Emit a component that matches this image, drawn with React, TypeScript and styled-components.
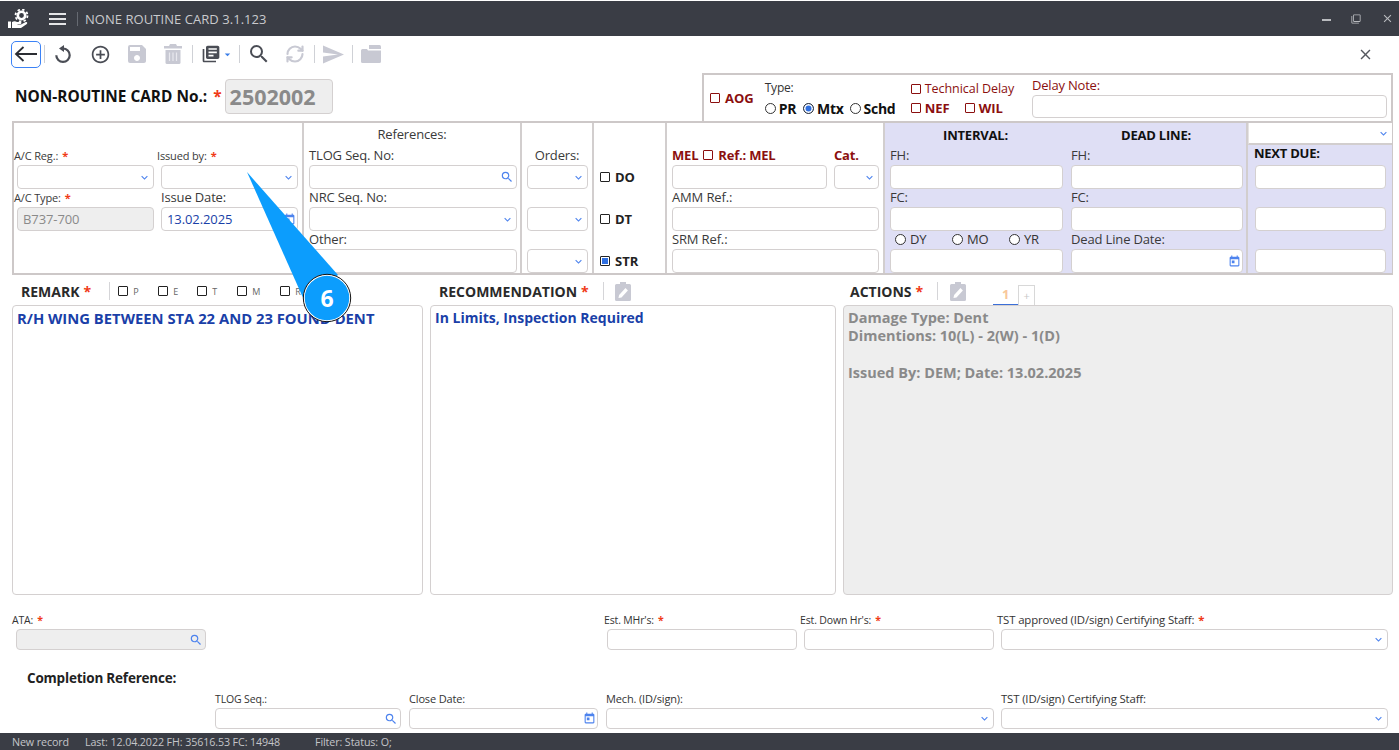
import React from "react";
import styled, { createGlobalStyle } from "styled-components";
import { RefreshCw } from "lucide-react";
import {
  MdSave,
  MdLibraryBooks,
  MdSearch,
  MdSend,
  MdToday,
  MdExpandMore,
  MdClose,
  MdFilterNone,
  MdArrowDropDown,
  MdAddCircleOutline,
} from "react-icons/md";

const FONT = `"Open Sans", "Noto Sans", "Liberation Sans", sans-serif`;

const Global = createGlobalStyle`
  html, body { margin: 0; padding: 0; background: #fff; overflow: hidden; }
  body { font-family: ${FONT}; color: #333; }
  * { box-sizing: border-box; }
`;

const Page = styled.div`
  position: relative;
  width: 1399px;
  height: 750px;
  display: flex;
  flex-direction: column;
  overflow: hidden;
  background: #fff;
`;

const TitleBar = styled.header`
  margin-top: 1px;
  height: 35px;
  flex: none;
  background: #3a3d45;
  display: flex;
  align-items: center;
  padding-left: 8px;
  color: #d4d5d8;
`;
const MenuSlot = styled.span`
  display: flex;
  margin-left: 19px;
`;
const TitleSep = styled.span`
  width: 1px;
  height: 14px;
  background: #666a72;
  margin: 0 7px 0 11px;
`;
const TitleText = styled.span`
  font-size: 13px;
  letter-spacing: 0.05px;
  color: #c9cacd;
`;
const WindowButtons = styled.div`
  margin-left: auto;
  display: flex;
  align-items: center;
  gap: 20px;
  padding-right: 5px;
  color: #b9bbbf;
`;
const MinBar = styled.span`
  width: 9px;
  height: 2px;
  background: #b9bbbf;
  margin-top: 3px;
`;

const Toolbar = styled.nav`
  height: 36px;
  flex: none;
  display: flex;
  align-items: center;
  padding: 0 25px 0 11px;
`;
const BackButton = styled.button`
  width: 30px;
  height: 27px;
  padding: 0;
  border: 1.5px solid #3b82f6;
  border-radius: 5px;
  background: #fff;
  display: flex;
  align-items: center;
  justify-content: center;
`;
const ToolSep = styled.span<{ $ml: number }>`
  width: 1px;
  height: 18px;
  background: #cfd1d6;
  margin-left: ${(p) => p.$ml}px;
`;
const ToolIcon = styled.span<{ $ml: number; $off?: boolean }>`
  width: 24px;
  height: 24px;
  flex: none;
  margin-left: ${(p) => p.$ml}px;
  display: flex;
  align-items: center;
  justify-content: center;
  color: ${(p) => (p.$off ? "#c8c9d3" : "#4a4d55")};
`;
const Caret = styled.span`
  display: flex;
  width: 13px;
  margin-left: -2px;
  color: #3b7ee8;
`;
const CloseIcon = styled.span`
  margin-left: auto;
  color: #55585f;
  display: flex;
`;

const HeaderRow = styled.section`
  height: 49px;
  flex: none;
  display: flex;
  align-items: flex-start;
  padding: 1px 6px 0 15px;
`;
const CardNo = styled.div`
  display: flex;
  align-items: center;
  height: 47px;
  padding-bottom: 1px;
  font-size: 15.4px;
  font-weight: 700;
  color: #111;
  white-space: pre;
`;
const Star = styled.span`
  color: #f03a17;
  font-weight: 700;
  margin-left: 6px;
`;
const CardValue = styled.span`
  margin-left: 3px;
  width: 108px;
  height: 35px;
  border: 1px solid #d4d0d0;
  border-radius: 4px;
  background: #eee;
  color: #8a8a8a;
  font-size: 21.5px;
  display: flex;
  align-items: center;
  padding-left: 4px;
`;
const DelayBox = styled.div`
  margin-left: auto;
  width: 691px;
  height: 48px;
  border: 2px solid #cdc8c8;
  border-bottom: 0;
  display: flex;
  position: relative;
`;
const AogCol = styled.div`
  width: 61px;
  padding: 0 0 0 6px;
  display: flex;
  align-items: center;
  height: 46px;
  gap: 5px;
  color: #8b0f0f;
  font-size: 13px;
  font-weight: 700;
`;
const TypeCol = styled.div`
  width: 147px;
  display: flex;
  flex-direction: column;
  padding-top: 5px;
`;
const PlainLabel = styled.span`
  font-size: 12px;
  line-height: 16px;
  color: #333;
  letter-spacing: -0.2px;
`;
const RadioRow = styled.div`
  display: flex;
  align-items: center;
  gap: 3px;
  font-size: 14px;
  font-weight: 700;
  color: #111;
  letter-spacing: -0.3px;
  height: 18px;
  margin-top: 3px;
  white-space: nowrap;
`;
const Radio = styled.i<{ $on?: boolean; $ml?: number }>`
  flex: none;
  width: 11px;
  height: 11px;
  border-radius: 50%;
  border: 1px solid #333;
  margin-left: ${(p) => p.$ml ?? 0}px;
  background: ${(p) => (p.$on ? "#2f6fe0" : "#fff")};
  box-shadow: ${(p) => (p.$on ? "inset 0 0 0 1.5px #fff" : "none")};
`;
const DelayFlags = styled.div`
  width: 122px;
  display: flex;
  flex-direction: column;
  padding-top: 4px;
  color: #8b0f0f;
  font-size: 12.5px;
`;
const FlagRow = styled.div`
  display: flex;
  align-items: center;
  height: 19px;
  letter-spacing: -0.05px;
`;
const Flag = styled.span<{ $bold?: boolean; $w?: number }>`
  display: flex;
  align-items: center;
  gap: 4px;
  font-size: ${(p) => (p.$bold ? 13 : 12.5)}px;
  font-weight: ${(p) => (p.$bold ? 700 : 400)};
  width: ${(p) => (p.$w ? `${p.$w}px` : "auto")};
  white-space: nowrap;
`;
const Check = styled.i<{ $red?: boolean; $on?: boolean }>`
  flex: none;
  display: block;
  width: 10px;
  height: 10px;
  border: 1px solid ${(p) => (p.$red ? "#8b0f0f" : "#222")};
  border-radius: 1px;
  background: ${(p) => (p.$on ? "#2f6fe0" : "#fff")};
  box-shadow: ${(p) => (p.$on ? "inset 0 0 0 1px #fff" : "none")};
`;
const DelayNote = styled.div`
  flex: 1;
  padding: 2px 4px 0 0;
  color: #8b0f0f;
  font-size: 13px;
  letter-spacing: -0.2px;
  line-height: 17px;
`;

const MainGrid = styled.section`
  margin: 0 6px 0 12px;
  height: 154px;
  flex: none;
  display: grid;
  grid-template-columns: 290px 218px 72px 73px 218px 363px 144px;
  border: 1px solid #cdc8c8;
  border-width: 2px 1px 2px 2px;
`;
const Cell = styled.div`
  display: grid;
  grid-template-rows: 20px 21px 25px 17px 25px 17px 25px;
  border-right: 2px solid #d2cece;
  min-width: 0;
  &:last-child { border-right: 0; }
`;
const Span = styled.div<{ $col?: string; $row: string }>`
  grid-row: ${(p) => p.$row};
  grid-column: ${(p) => p.$col ?? "auto"};
  min-width: 0;
`;
const AcCell = styled(Cell)`
  grid-template-columns: 143px 1fr;
`;
const Label = styled.label<{ $size?: number; $center?: boolean; $dark?: boolean; $pl?: number }>`
  display: flex;
  align-items: flex-end;
  justify-content: ${(p) => (p.$center ? "center" : "flex-start")};
  height: 100%;
  font-size: ${(p) => p.$size ?? 13}px;
  line-height: 17px;
  color: ${(p) => (p.$dark ? "#111" : "#3a3a3a")};
  letter-spacing: -0.15px;
  padding-left: ${(p) => p.$pl ?? 0}px;
  white-space: nowrap;
`;
const Req = styled.span`
  color: #f03a17;
  font-weight: 700;
  margin-left: 4px;
`;
const InputBox = styled.div<{ $ml?: number; $mr?: number; $off?: boolean; $w?: number; $h?: number }>`
  height: ${(p) => p.$h ?? 24}px;
  margin-top: 1px;
  margin-left: ${(p) => p.$ml ?? 0}px;
  margin-right: ${(p) => p.$mr ?? 0}px;
  width: ${(p) => (p.$w ? `${p.$w}px` : "auto")};
  border: 1px solid #d4d0d0;
  border-radius: 4px;
  background: ${(p) => (p.$off ? "#eee" : "#fff")};
  display: flex;
  align-items: center;
  justify-content: flex-end;
  padding: 0 3px 0 5px;
  color: #4d83ee;
  position: relative;
  flex: none;
`;
const InputValue = styled.span<{ $grey?: boolean }>`
  margin-right: auto;
  font-size: 13px;
  letter-spacing: -0.1px;
  color: ${(p) => (p.$grey ? "#8a8a8a" : "#1a3fa8")};
`;
const CheckRow = styled.div`
  height: 100%;
  display: flex;
  align-items: center;
  gap: 5px;
  padding-left: 6px;
  font-size: 13px;
  font-weight: 700;
  color: #222;
`;
const MelHead = styled.div`
  display: flex;
  align-items: center;
  height: 100%;
  padding: 3px 0 0 5px;
  font-size: 13px;
  font-weight: 700;
  color: #8b0f0f;
  letter-spacing: -0.2px;
  white-space: nowrap;
`;
const MelLabel = styled.span`
  display: flex;
  align-items: center;
  gap: 5px;
  width: 162px;
`;
const MelRow = styled.div`
  display: flex;
  gap: 7px;
  padding: 0 4px 0 5px;
`;
const IntervalCell = styled(Cell)`
  background: #dfdff5;
  grid-template-columns: 181px 1fr;
`;
const IntervalTitle = styled.div`
  font-size: 13px;
  font-weight: 700;
  color: #111;
  letter-spacing: -0.2px;
  text-align: center;
  line-height: 25px;
`;
const RadioLine = styled.div`
  display: flex;
  align-items: flex-end;
  height: 100%;
  padding: 0 0 1px 10px;
  font-size: 13px;
  color: #333;
  letter-spacing: -0.3px;
`;
const RadioOpt = styled.span`
  display: flex;
  align-items: center;
  gap: 4px;
  width: 58px;
  line-height: 15px;
`;
const NextCell = styled(Cell)`
  background: #dfdff5;
  grid-template-rows: 22px 19px 25px 17px 25px 17px 25px;
`;
const NextSelect = styled.div`
  background: #fff;
  border-bottom: 2px solid #d2cece;
  border-left: 1px solid #e6e3e3;
  display: flex;
  align-items: center;
  justify-content: flex-end;
  padding-right: 3px;
  color: #4d83ee;
  height: 100%;
`;
const NextDue = styled.div`
  font-size: 13px;
  font-weight: 700;
  color: #111;
  letter-spacing: -0.25px;
  padding-left: 6px;
  line-height: 17px;
`;

const SectionRow = styled.section`
  height: 30px;
  flex: none;
  display: grid;
  grid-template-columns: 418px 411px 1fr;
  margin: 0 6px 0 12px;
`;
const SectionHead = styled.div<{ $pl: number }>`
  display: flex;
  align-items: center;
  padding: 2px 0 0 ${(p) => p.$pl}px;
  font-size: 14px;
  font-weight: 700;
  color: #2a2a2a;
  white-space: nowrap;
`;
const HeadSep = styled.span<{ $ml: number; $mr?: number }>`
  width: 1px;
  height: 18px;
  background: #d5d5d8;
  margin: 0 ${(p) => p.$mr ?? 11}px 0 ${(p) => p.$ml}px;
`;
const MiniCheck = styled.span<{ $w: number }>`
  display: flex;
  align-items: center;
  gap: 5px;
  width: ${(p) => p.$w}px;
  font-size: 9px;
  font-weight: 400;
  color: #666;
`;
const Tabs = styled.div`
  display: flex;
  align-self: flex-end;
  margin-left: 27px;
  height: 20px;
`;
const TabOne = styled.span`
  width: 25px;
  border-bottom: 1px solid #3b6fd8;
  color: #f8c79a;
  font-size: 13px;
  text-align: center;
  line-height: 19px;
`;
const TabPlus = styled.span`
  width: 17px;
  border: 1px solid #d8d8d8;
  border-bottom: 0;
  color: #c8c8c8;
  font-size: 11px;
  font-weight: 400;
  text-align: center;
  line-height: 19px;
`;

const Panes = styled.section`
  height: 290px;
  flex: none;
  margin: 0 6px 0 12px;
  display: grid;
  grid-template-columns: 411px 406px 1fr;
  gap: 7px;
`;
const Pane = styled.div<{ $off?: boolean; $size: number }>`
  border: 1px solid #d4d0d0;
  border-radius: 4px;
  background: ${(p) => (p.$off ? "#eee" : "#fff")};
  padding: 3px 4px;
  font-size: ${(p) => p.$size}px;
  line-height: 18.3px;
  font-weight: 700;
  color: ${(p) => (p.$off ? "#8a8a8a" : "#1a3fa8")};
  white-space: pre-line;
`;

const BottomRow = styled.section<{ $cols: string; $h: number; $mt: number; $pl?: number }>`
  flex: none;
  height: ${(p) => p.$h}px;
  margin-top: ${(p) => p.$mt}px;
  padding-left: ${(p) => p.$pl ?? 12}px;
  display: grid;
  grid-template-columns: ${(p) => p.$cols};
`;
const BottomField = styled.div`
  display: flex;
  flex-direction: column;
`;
const SmallLabel = styled.span<{ $size?: number }>`
  font-size: ${(p) => p.$size ?? 10.5}px;
  line-height: 16px;
  height: 16px;
  color: #333;
  letter-spacing: -0.15px;
  white-space: nowrap;
`;
const CompletionTitle = styled.h4`
  flex: none;
  margin: 20px 0 0 27px;
  height: 16px;
  font-size: 13.5px;
  line-height: 16px;
  font-weight: 700;
  color: #222;
  letter-spacing: -0.2px;
`;

const StatusBar = styled.footer`
  margin-top: auto;
  height: 17px;
  flex: none;
  background: #3a3d45;
  color: #c4c5c9;
  font-size: 10.7px;
  line-height: 19px;
  letter-spacing: -0.1px;
  display: flex;
  padding-left: 12px;
  overflow: hidden;
`;
const StatusItem = styled.span<{ $w: number }>`
  width: ${(p) => p.$w}px;
  white-space: nowrap;
`;

const Callout = styled.svg`
  position: absolute;
  left: 240px;
  top: 165px;
  pointer-events: none;
`;
const CalloutNum = styled.text`
  font-family: ${FONT};
  font-size: 23px;
  font-weight: 700;
  fill: #fff;
`;
const IconNudge = styled.span<{ $mr: number }>`
  display: flex;
  margin-right: ${(p) => p.$mr}px;
`;

const Chevron = () => <IconNudge $mr={-1}><MdExpandMore size={13} /></IconNudge>;
const Cal = () => <IconNudge $mr={-2}><MdToday size={13} /></IconNudge>;
const Lens = () => <IconNudge $mr={-1}><MdSearch size={14} /></IconNudge>;

const Clip = () => (
  <svg width="16" height="19" viewBox="0 0 16 19" fill="#c8c9d3">
    <path d="M5 0h6v2h3.500A1.500 1.500 0 0 1 16 3.500V17.500A1.500 1.500 0 0 1 14.500 19H1.500A1.500 1.500 0 0 1 0 17.500V3.500A1.500 1.500 0 0 1 1.500 2H5z" />
    <path d="M3.500 16l.6-3 6.400-7 2.400 2.400L6.500 15.400z" fill="#fff" />
  </svg>
);

const Logo = () => (
  <svg width="22" height="20" viewBox="0 0 22 20" fill="none">
    <circle cx="13.500" cy="6.500" r="3.700" stroke="#fff" strokeWidth="2.600" />
    <circle cx="13.500" cy="6.500" r="6" stroke="#fff" strokeWidth="1.800" strokeDasharray="2.400 2.300" />
    <path d="M0 12.500h3V19H0z" fill="#fff" />
    <path d="M4 13c2-1 3.500-.8 5 0h3.500c1.200 0 1.200 2 0 2H9.500v.5H13l4.800-2.400c1.400-.4 2 1 1 1.800L13 19H4z" fill="#fff" />
  </svg>
);

const Menu = () => (
  <svg width="17" height="12" viewBox="0 0 17 12" fill="#e4e5e7">
    <rect width="17" height="2" />
    <rect y="5" width="17" height="2" />
    <rect y="10" width="17" height="2" />
  </svg>
);

const BackArrow = () => (
  <svg width="24" height="18" viewBox="0 0 24 18" fill="none" stroke="#2b2d33" strokeWidth="1.800">
    <path d="M23 9H2M9.500 2 2 9l7.500 7" />
  </svg>
);

const Reload = () => (
  <svg width="18" height="18" viewBox="0 0 18 18" fill="none">
    <path d="M9 3.500A6.700 6.700 0 1 1 2.300 10.200" stroke="#4a4d55" strokeWidth="2.200" />
    <path d="M10 0v7L5 3.500z" fill="#4a4d55" />
  </svg>
);

const Trash = () => (
  <svg width="18" height="20" viewBox="0 0 18 20" fill="#c8c9d3">
    <path d="M6 0h6l1 2h5v2.500H0V2h5z" />
    <path d="M1.500 6h15v12.500a1.500 1.500 0 0 1-1.500 1.500H3a1.500 1.500 0 0 1-1.500-1.500z" />
    <path d="M5.500 8.500v8.500M9 8.500v8.500M12.500 8.500v8.500" stroke="#e8e8ee" strokeWidth="1.200" />
  </svg>
);

const FolderTab = () => (
  <svg width="20" height="18" viewBox="0 0 20 18" fill="#c8c9d3">
    <path d="M8 0h10.500A1.500 1.500 0 0 1 20 1.500V4H8z" />
    <path d="M0 5.500A1.500 1.500 0 0 1 1.500 4H6l1 1.500h13v11A1.500 1.500 0 0 1 18.500 18h-17A1.500 1.500 0 0 1 0 16.500z" />
  </svg>
);

const Rad = ({ on, ml, children }: { on?: boolean; ml?: number; children: React.ReactNode }) => (
  <>
    <Radio $on={on} $ml={ml} />
    <span>{children}</span>
  </>
);

export default function App() {
  return (
    <Page>
      <Global />
      <TitleBar>
        <Logo />
        <MenuSlot><Menu /></MenuSlot>
        <TitleSep />
        <TitleText>NONE ROUTINE CARD 3.1.123</TitleText>
        <WindowButtons>
          <MinBar />
          <MdFilterNone size={10} />
          <MdClose size={13} />
        </WindowButtons>
      </TitleBar>

      <Toolbar>
        <BackButton aria-label="Back">
          <BackArrow />
        </BackButton>
        <ToolSep $ml={3} />
        <ToolIcon $ml={6}><Reload /></ToolIcon>
        <ToolIcon $ml={13}><MdAddCircleOutline size={21} /></ToolIcon>
        <ToolIcon $ml={13} $off><MdSave size={24} /></ToolIcon>
        <ToolIcon $ml={12} $off><Trash /></ToolIcon>
        <ToolSep $ml={7} />
        <ToolIcon $ml={6}><MdLibraryBooks size={20} /></ToolIcon>
        <Caret><MdArrowDropDown size={15} /></Caret>
        <ToolSep $ml={5} />
        <ToolIcon $ml={7}><MdSearch size={26} /></ToolIcon>
        <ToolIcon $ml={12} $off><RefreshCw size={20} strokeWidth={2.6} /></ToolIcon>
        <ToolSep $ml={7} />
        <ToolIcon $ml={6} $off><MdSend size={25} /></ToolIcon>
        <ToolSep $ml={7} />
        <ToolIcon $ml={6} $off><FolderTab /></ToolIcon>
        <CloseIcon><MdClose size={17} /></CloseIcon>
      </Toolbar>

      <HeaderRow>
        <CardNo>
          NON-ROUTINE CARD No.:<Star>*</Star>
          <CardValue>2502002</CardValue>
        </CardNo>
        <DelayBox>
          <AogCol><Check $red />AOG</AogCol>
          <TypeCol>
            <PlainLabel>Type:</PlainLabel>
            <RadioRow>
              <Rad>PR</Rad>
              <Rad on ml={4}>Mtx</Rad>
              <Rad ml={3}>Schd</Rad>
            </RadioRow>
          </TypeCol>
          <DelayFlags>
            <FlagRow><Flag><Check $red />Technical Delay</Flag></FlagRow>
            <FlagRow>
              <Flag $bold $w={54}><Check $red />NEF</Flag>
              <Flag $bold><Check $red />WIL</Flag>
            </FlagRow>
          </DelayFlags>
          <DelayNote>
            Delay Note:
            <InputBox $w={355} $h={23} />
          </DelayNote>
        </DelayBox>
      </HeaderRow>

      <MainGrid>
        <AcCell>
          <Span $row="2" $col="1"><Label $size={11}>A/C Reg.:<Req>*</Req></Label></Span>
          <Span $row="2" $col="2"><Label $size={11}>Issued by:<Req>*</Req></Label></Span>
          <Span $row="3" $col="1"><InputBox $ml={3} $mr={3}><Chevron /></InputBox></Span>
          <Span $row="3" $col="2"><InputBox $ml={4} $mr={4}><Chevron /></InputBox></Span>
          <Span $row="4" $col="1"><Label $size={11}>A/C Type:<Req>*</Req></Label></Span>
          <Span $row="4" $col="2"><Label $pl={4}>Issue Date:</Label></Span>
          <Span $row="5" $col="1"><InputBox $ml={3} $mr={3} $off><InputValue $grey>B737-700</InputValue></InputBox></Span>
          <Span $row="5" $col="2"><InputBox $ml={4} $mr={4}><InputValue>13.02.2025</InputValue><Cal /></InputBox></Span>
        </AcCell>

        <Cell>
          <Span $row="1"><Label $center>References:</Label></Span>
          <Span $row="2"><Label $pl={5}>TLOG Seq. No:</Label></Span>
          <Span $row="3"><InputBox $ml={5} $mr={3}><Lens /></InputBox></Span>
          <Span $row="4"><Label $pl={5}>NRC Seq. No:</Label></Span>
          <Span $row="5"><InputBox $ml={5} $mr={3}><Chevron /></InputBox></Span>
          <Span $row="6"><Label $pl={5}>Other:</Label></Span>
          <Span $row="7"><InputBox $ml={5} $mr={3} /></Span>
        </Cell>

        <Cell>
          <Span $row="2"><Label $center>Orders:</Label></Span>
          <Span $row="3"><InputBox $ml={5} $mr={4}><Chevron /></InputBox></Span>
          <Span $row="5"><InputBox $ml={5} $mr={4}><Chevron /></InputBox></Span>
          <Span $row="7"><InputBox $ml={5} $mr={4}><Chevron /></InputBox></Span>
        </Cell>

        <Cell>
          <Span $row="3"><CheckRow><Check />DO</CheckRow></Span>
          <Span $row="5"><CheckRow><Check />DT</CheckRow></Span>
          <Span $row="7"><CheckRow><Check $on />STR</CheckRow></Span>
        </Cell>

        <Cell>
          <Span $row="2">
            <MelHead>
              <MelLabel>MEL <Check $red /> Ref.: MEL</MelLabel>
              <span>Cat.</span>
            </MelHead>
          </Span>
          <Span $row="3">
            <MelRow>
              <InputBox $w={155} />
              <InputBox $w={45}><Chevron /></InputBox>
            </MelRow>
          </Span>
          <Span $row="4"><Label $pl={5}>AMM Ref.:</Label></Span>
          <Span $row="5"><InputBox $ml={5} $mr={4} /></Span>
          <Span $row="6"><Label $pl={5}>SRM Ref.:</Label></Span>
          <Span $row="7"><InputBox $ml={5} $mr={4} /></Span>
        </Cell>

        <IntervalCell>
          <Span $row="1" $col="1"><IntervalTitle>INTERVAL:</IntervalTitle></Span>
          <Span $row="1" $col="2"><IntervalTitle>DEAD LINE:</IntervalTitle></Span>
          <Span $row="2" $col="1"><Label $pl={5}>FH:</Label></Span>
          <Span $row="2" $col="2"><Label $pl={5}>FH:</Label></Span>
          <Span $row="3" $col="1"><InputBox $ml={5} $mr={3} /></Span>
          <Span $row="3" $col="2"><InputBox $ml={5} $mr={3} /></Span>
          <Span $row="4" $col="1"><Label $pl={5}>FC:</Label></Span>
          <Span $row="4" $col="2"><Label $pl={5}>FC:</Label></Span>
          <Span $row="5" $col="1"><InputBox $ml={5} $mr={3} /></Span>
          <Span $row="5" $col="2"><InputBox $ml={5} $mr={3} /></Span>
          <Span $row="6" $col="1">
            <RadioLine>
              <RadioOpt><Radio />DY</RadioOpt>
              <RadioOpt><Radio />MO</RadioOpt>
              <RadioOpt><Radio />YR</RadioOpt>
            </RadioLine>
          </Span>
          <Span $row="6" $col="2"><Label $pl={5}>Dead Line Date:</Label></Span>
          <Span $row="7" $col="1"><InputBox $ml={5} $mr={3} /></Span>
          <Span $row="7" $col="2"><InputBox $ml={5} $mr={3}><Cal /></InputBox></Span>
        </IntervalCell>

        <NextCell>
          <Span $row="1"><NextSelect><Chevron /></NextSelect></Span>
          <Span $row="2"><NextDue>NEXT DUE:</NextDue></Span>
          <Span $row="3"><InputBox $ml={7} $mr={6} /></Span>
          <Span $row="5"><InputBox $ml={7} $mr={6} /></Span>
          <Span $row="7"><InputBox $ml={7} $mr={6} /></Span>
        </NextCell>
      </MainGrid>

      <SectionRow>
        <SectionHead $pl={9}>
          REMARK<Req>*</Req>
          <HeadSep $ml={18} $mr={8} />
          <MiniCheck $w={40}><Check />P</MiniCheck>
          <MiniCheck $w={39}><Check />E</MiniCheck>
          <MiniCheck $w={40}><Check />T</MiniCheck>
          <MiniCheck $w={43}><Check />M</MiniCheck>
          <MiniCheck $w={20}><Check />R</MiniCheck>
        </SectionHead>
        <SectionHead $pl={9}>
          RECOMMENDATION<Req>*</Req>
          <HeadSep $ml={14} />
          <Clip />
        </SectionHead>
        <SectionHead $pl={9}>
          ACTIONS<Req>*</Req>
          <HeadSep $ml={14} $mr={12} />
          <Clip />
          <Tabs>
            <TabOne>1</TabOne>
            <TabPlus>+</TabPlus>
          </Tabs>
        </SectionHead>
      </SectionRow>

      <Panes>
        <Pane $size={14.8}>R/H WING BETWEEN STA 22 AND 23 FOUND DENT</Pane>
        <Pane $size={14}>In Limits, Inspection Required</Pane>
        <Pane $off $size={14.5}>{"Damage Type: Dent\nDimentions: 10(L) - 2(W) - 1(D)\n\nIssued By: DEM; Date: 13.02.2025"}</Pane>
      </Panes>

      <BottomRow $cols="592px 196px 197px 396px" $h={38} $mt={17}>
        <BottomField>
          <SmallLabel>ATA:<Req>*</Req></SmallLabel>
          <InputBox $w={190} $ml={4} $off $h={21}><Lens /></InputBox>
        </BottomField>
        <BottomField>
          <SmallLabel>Est. MHr's:<Req>*</Req></SmallLabel>
          <InputBox $w={190} $ml={3} $h={21} />
        </BottomField>
        <BottomField>
          <SmallLabel>Est. Down Hr's:<Req>*</Req></SmallLabel>
          <InputBox $w={190} $ml={4} $h={21} />
        </BottomField>
        <BottomField>
          <SmallLabel $size={11.4}>TST approved (ID/sign) Certifying Staff:<Req>*</Req></SmallLabel>
          <InputBox $w={387} $ml={4} $h={21}><Chevron /></InputBox>
        </BottomField>
      </BottomRow>

      <CompletionTitle>Completion Reference:</CompletionTitle>

      <BottomRow $cols="194px 197px 395px 392px" $h={38} $mt={5} $pl={215}>
        <BottomField>
          <SmallLabel>TLOG Seq.:</SmallLabel>
          <InputBox $w={186} $h={21}><Lens /></InputBox>
        </BottomField>
        <BottomField>
          <SmallLabel $size={11}>Close Date:</SmallLabel>
          <InputBox $w={189} $h={21}><Cal /></InputBox>
        </BottomField>
        <BottomField>
          <SmallLabel $size={11}>Mech. (ID/sign):</SmallLabel>
          <InputBox $w={388} $h={21}><Chevron /></InputBox>
        </BottomField>
        <BottomField>
          <SmallLabel $size={11.4}>TST (ID/sign) Certifying Staff:</SmallLabel>
          <InputBox $w={387} $h={21}><Chevron /></InputBox>
        </BottomField>
      </BottomRow>

      <StatusBar>
        <StatusItem $w={73}>New record</StatusItem>
        <StatusItem $w={230}>Last: 12.04.2022 FH: 35616.53 FC: 14948</StatusItem>
        <StatusItem $w={100}>Filter: Status: O;</StatusItem>
      </StatusBar>

      <Callout width="120" height="165" viewBox="240 165 120 165">
        <path d="M247 172 L304 300 L338 275 Z" fill="#0c9dfd" />
        <circle cx="327" cy="298" r="23" fill="#0c9dfd" stroke="#fff" strokeWidth="1.500" />
        <circle cx="327" cy="298" r="23.700" fill="none" stroke="#111" strokeWidth="1" />
        <CalloutNum x="327" y="306.500" textAnchor="middle">6</CalloutNum>
      </Callout>
    </Page>
  );
}
